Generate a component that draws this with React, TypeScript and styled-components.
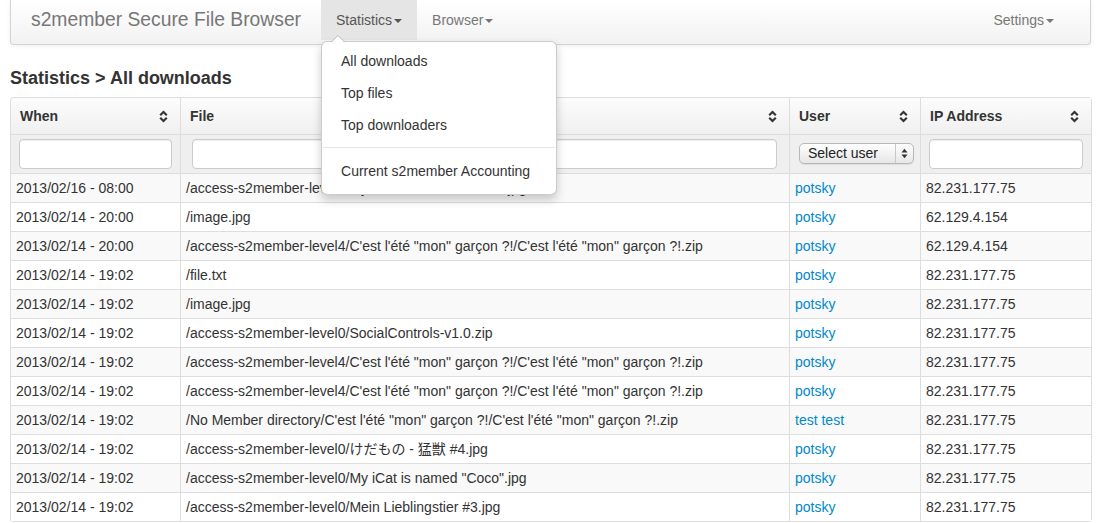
import styled, { createGlobalStyle } from 'styled-components';

const GlobalStyle = createGlobalStyle`
    html, body {
        margin: 0;
        padding: 0;
        overflow: hidden;
        background: #fff;
    }
    body {
        font-family: "Liberation Sans", Arial, sans-serif;
        font-size: 14px;
        line-height: 20px;
        color: #333;
    }
`

type Download = {
    when: string;
    file: string;
    user: string;
    ip: string;
};

const LEVEL4_ZIP = `/access-s2member-level4/C'est l'été "mon" garçon ?!/C'est l'été "mon" garçon ?!.zip`;

const downloads: Download[] = [
    { when: '2013/02/16 - 08:00', file: '/access-s2member-level4/My iCat is named "Coco".jpg', user: 'potsky', ip: '82.231.177.75' },
    { when: '2013/02/14 - 20:00', file: '/image.jpg', user: 'potsky', ip: '62.129.4.154' },
    { when: '2013/02/14 - 20:00', file: LEVEL4_ZIP, user: 'potsky', ip: '62.129.4.154' },
    { when: '2013/02/14 - 19:02', file: '/file.txt', user: 'potsky', ip: '82.231.177.75' },
    { when: '2013/02/14 - 19:02', file: '/image.jpg', user: 'potsky', ip: '82.231.177.75' },
    { when: '2013/02/14 - 19:02', file: '/access-s2member-level0/SocialControls-v1.0.zip', user: 'potsky', ip: '82.231.177.75' },
    { when: '2013/02/14 - 19:02', file: LEVEL4_ZIP, user: 'potsky', ip: '82.231.177.75' },
    { when: '2013/02/14 - 19:02', file: LEVEL4_ZIP, user: 'potsky', ip: '82.231.177.75' },
    { when: '2013/02/14 - 19:02', file: `/No Member directory/C'est l'été "mon" garçon ?!/C'est l'été "mon" garçon ?!.zip`, user: 'test test', ip: '82.231.177.75' },
    { when: '2013/02/14 - 19:02', file: '/access-s2member-level0/けだもの - 猛獣 #4.jpg', user: 'potsky', ip: '82.231.177.75' },
    { when: '2013/02/14 - 19:02', file: '/access-s2member-level0/My iCat is named "Coco".jpg', user: 'potsky', ip: '82.231.177.75' },
    { when: '2013/02/14 - 19:02', file: '/access-s2member-level0/Mein Lieblingstier #3.jpg', user: 'potsky', ip: '82.231.177.75' },
];

const SortIcon = () => (
    <svg width="9" height="13" viewBox="0 0 9 13">
        <path d="M1.2 5.2 L4.5 1.9 L7.8 5.2" fill="none" stroke="#333" strokeWidth="2.1" />
        <path d="M1.2 7.8 L4.5 11.1 L7.8 7.8" fill="none" stroke="#333" strokeWidth="2.1" />
    </svg>
)

const App = () => {
    return (
        <Page>
            <GlobalStyle />
            <NavBar>
                <Brand>s2member Secure File Browser</Brand>
                <NavItem active>
                    Statistics<Caret />
                    <Dropdown>
                        <MenuItem>All downloads</MenuItem>
                        <MenuItem>Top files</MenuItem>
                        <MenuItem>Top downloaders</MenuItem>
                        <Divider />
                        <MenuItem>Current s2member Accounting</MenuItem>
                    </Dropdown>
                </NavItem>
                <NavItem>Browser<Caret /></NavItem>
                <Spacer />
                <NavItem>Settings<Caret /></NavItem>
            </NavBar>

            <Heading>Statistics &gt; All downloads</Heading>

            <Table>
                <colgroup>
                    <col style={{ width: 170 }} />
                    <col style={{ width: 609 }} />
                    <col style={{ width: 131 }} />
                    <col style={{ width: 171 }} />
                </colgroup>
                <thead>
                    <tr>
                        {['When', 'File', 'User', 'IP Address'].map((label, i) => (
                            <Th key={label} first={i === 0}>
                                <ThInner>{label}<SortIcon /></ThInner>
                            </Th>
                        ))}
                    </tr>
                    <tr>
                        <FilterCell><TextInput /></FilterCell>
                        <FilterCell inset="4px 12px 0 11px"><TextInput /></FilterCell>
                        <FilterCell inset="8px 6px 0 9px">
                            <FakeSelect>
                                <span>Select user</span>
                                <SelectArrows>
                                    <svg width="7" height="11" viewBox="0 0 7 11">
                                        <path d="M0.5 4.5 L3.5 0.8 L6.5 4.5 Z" fill="#333" />
                                        <path d="M0.5 6.5 L3.5 10.2 L6.5 6.5 Z" fill="#333" />
                                    </svg>
                                </SelectArrows>
                            </FakeSelect>
                        </FilterCell>
                        <FilterCell><TextInput /></FilterCell>
                    </tr>
                </thead>
                <tbody>
                    {downloads.map((d, i) => (
                        <Row key={i} striped={i % 2 === 0}>
                            <Td>{d.when}</Td>
                            <Td>{d.file}</Td>
                            <Td><UserLink>{d.user}</UserLink></Td>
                            <Td>{d.ip}</Td>
                        </Row>
                    ))}
                </tbody>
            </Table>
        </Page>
    )
}

const Page = styled.div`
    padding: 0 15px 0 10px;
`

const NavBar = styled.div`
    display: flex;
    align-items: flex-start;
    height: 44px;
    padding-right: 21px;
    border: 1px solid #d4d4d4;
    border-top: none;
    border-radius: 0 0 4px 4px;
    background: linear-gradient(#ffffff, #f2f2f2);
    box-shadow: 0 1px 4px rgba(0, 0, 0, 0.065);
`

const Brand = styled.div`
    padding: 10px 20px;
    font-size: 19.3px;
    line-height: 20px;
    color: #777;
    white-space: nowrap;
`

const NavItem = styled.div<{ active?: boolean }>`
    position: relative;
    display: flex;
    align-items: center;
    height: 40px;
    padding: 0 15px;
    color: ${p => (p.active ? '#555' : '#777')};
    background: ${p => (p.active ? '#e5e5e5' : 'transparent')};
    white-space: nowrap;
`

const Caret = styled.span`
    display: inline-block;
    margin-left: 2px;
    margin-top: 2px;
    border-top: 4px solid currentColor;
    border-left: 4px solid transparent;
    border-right: 4px solid transparent;
`

const Spacer = styled.div`
    flex: 1;
`

const Dropdown = styled.div`
    position: absolute;
    top: 41px;
    left: 0;
    z-index: 10;
    width: 234px;
    padding: 3px 0 7px;
    background: #fff;
    border: 1px solid rgba(0, 0, 0, 0.2);
    border-radius: 6px;
    box-shadow: 0 5px 10px rgba(0, 0, 0, 0.2);
    color: #333;

    &::before {
        content: '';
        position: absolute;
        top: -7px;
        left: 9px;
        border-left: 7px solid transparent;
        border-right: 7px solid transparent;
        border-bottom: 7px solid rgba(0, 0, 0, 0.2);
    }
    &::after {
        content: '';
        position: absolute;
        top: -6px;
        left: 10px;
        border-left: 6px solid transparent;
        border-right: 6px solid transparent;
        border-bottom: 6px solid #fff;
    }
`

const MenuItem = styled.div`
    padding: 6px 19px;
    line-height: 20px;
    white-space: nowrap;
`

const Divider = styled.div`
    height: 1px;
    margin: 6px 1px;
    background: #e5e5e5;
    border-bottom: 1px solid #fff;
`

const Heading = styled.h4`
    margin: 23px 0 9px;
    font-size: 18px;
    line-height: 20px;
    font-weight: bold;
    color: #333;
`

const Table = styled.table`
    width: 100%;
    table-layout: fixed;
    border-collapse: separate;
    border-spacing: 0;
    border: 1px solid #ddd;
    border-left: none;
    border-radius: 4px;
`

const Th = styled.th<{ first?: boolean }>`
    padding: 8px 12px 8px 9px;
    text-align: left;
    font-weight: bold;
    line-height: 20px;
    background: linear-gradient(#fcfcfc, #f0f0f0);
    border-left: 1px solid #ddd;
    border-top-left-radius: ${p => (p.first ? '4px' : '0')};
`

const ThInner = styled.div`
    display: flex;
    align-items: center;
    justify-content: space-between;
`

const FilterCell = styled.td<{ inset?: string }>`
    height: 39px;
    box-sizing: border-box;
    padding: ${p => p.inset ?? '4px 8px 0 8px'};
    vertical-align: top;
    background: #efefef;
    border-top: 1px solid #ddd;
    border-left: 1px solid #ddd;
`

const TextInput = styled.input.attrs({ type: 'text' })`
    display: block;
    width: 100%;
    height: 30px;
    box-sizing: border-box;
    margin: 0;
    padding: 4px 6px;
    background: #fff;
    border: 1px solid #ccc;
    border-radius: 4px;
    box-shadow: inset 0 1px 1px rgba(0, 0, 0, 0.075);
    font: inherit;
`

const FakeSelect = styled.div`
    display: flex;
    align-items: center;
    justify-content: space-between;
    height: 21px;
    box-sizing: border-box;
    padding-left: 8px;
    background: linear-gradient(#ffffff, #e6e6e6);
    border: 1px solid #b8b8b8;
    border-radius: 5px;
    box-shadow: 0 1px 1px rgba(0, 0, 0, 0.08);
    font-size: 14px;
    line-height: 19px;
    color: #222;
`

const SelectArrows = styled.div`
    display: flex;
    align-items: center;
    justify-content: center;
    width: 17px;
    height: 100%;
    border-left: 1px solid #c8c8c8;
`

const Row = styled.tr<{ striped?: boolean }>`
    background: ${p => (p.striped ? '#f9f9f9' : '#fff')};
`

const Td = styled.td`
    padding: 4px 5px;
    line-height: 20px;
    border-top: 1px solid #ddd;
    border-left: 1px solid #ddd;
    white-space: nowrap;
    overflow: hidden;
    font-family: "Liberation Sans", "Noto Sans CJK JP", Arial, sans-serif;
`

const UserLink = styled.a`
    color: #0088cc;
    text-decoration: none;
    cursor: pointer;
`

export default App;
